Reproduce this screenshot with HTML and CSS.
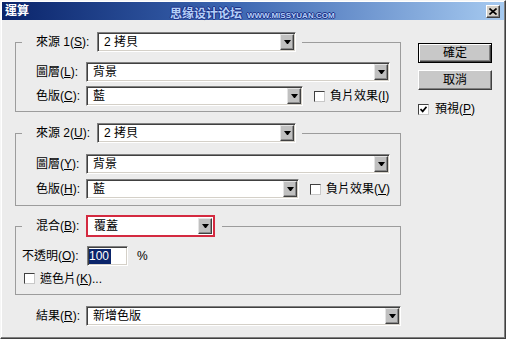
FILE: index.html
```html
<!DOCTYPE html>
<html lang="zh-Hant">
<head>
    <meta charset="UTF-8">
    <meta name="viewport" content="width=device-width, initial-scale=1.0">
    <title>運算</title>
    <link rel="stylesheet" href="styles.css">
</head>
<body>
<div class="window">
    <div class="titlebar">
        <span class="title">運算</span>
        <span class="watermark">思缘设计论坛<small>WWW.MISSYUAN.COM</small></span>
        <span class="close">
            <svg width="8" height="7" viewBox="0 0 8 7"><path d="M0.5 0.5 L7.5 6.5 M7.5 0.5 L0.5 6.5" stroke="#000" stroke-width="1.6"/></svg>
        </span>
    </div>

    <div class="content">
        <div class="main">
            <!-- 來源 1 -->
            <fieldset class="group group-a">
                <legend class="legend">
                    <span class="lbl lbl-src">來源 1(<u>S</u>):</span>
                    <span class="select w-src"><span class="value">2 拷貝</span><span class="arrow"></span></span>
                </legend>
                <div class="rows">
                    <div class="row">
                        <span class="lbl">圖層(<u>L</u>):</span>
                        <span class="select w-full"><span class="value">背景</span><span class="arrow"></span></span>
                    </div>
                    <div class="row">
                        <span class="lbl">色版(<u>C</u>):</span>
                        <span class="select w-ch1"><span class="value">藍</span><span class="arrow"></span></span>
                        <span class="check"></span>
                        <span class="check-lbl">負片效果(<u>I</u>)</span>
                    </div>
                </div>
            </fieldset>

            <!-- 來源 2 -->
            <fieldset class="group group-b">
                <legend class="legend">
                    <span class="lbl lbl-src">來源 2(<u>U</u>):</span>
                    <span class="select w-src"><span class="value">2 拷貝</span><span class="arrow"></span></span>
                </legend>
                <div class="rows">
                    <div class="row">
                        <span class="lbl">圖層(<u>Y</u>):</span>
                        <span class="select w-full"><span class="value">背景</span><span class="arrow"></span></span>
                    </div>
                    <div class="row">
                        <span class="lbl">色版(<u>H</u>):</span>
                        <span class="select w-ch2"><span class="value">藍</span><span class="arrow"></span></span>
                        <span class="check"></span>
                        <span class="check-lbl">負片效果(<u>V</u>)</span>
                    </div>
                </div>
            </fieldset>

            <!-- 混合 -->
            <fieldset class="group group-c">
                <legend class="legend legend-mode">
                    <span class="lbl">混合(<u>B</u>):</span>
                    <span class="select marked w-mode"><span class="value">覆蓋</span><span class="arrow"></span></span>
                </legend>
                <div class="rows">
                    <div class="row row-opacity">
                        <span class="lbl lbl-opacity">不透明(<u>O</u>):</span>
                        <span class="field"><span class="sel">100</span></span>
                        <span class="unit">%</span>
                    </div>
                    <div class="row row-mask">
                        <span class="check"></span>
                        <span class="check-lbl">遮色片(<u>K</u>)...</span>
                    </div>
                </div>
            </fieldset>

            <div class="row row-result">
                <span class="lbl">結果(<u>R</u>):</span>
                <span class="select w-result"><span class="value">新增色版</span><span class="arrow"></span></span>
            </div>
        </div>

        <div class="side">
            <button class="btn btn-default">確定</button>
            <button class="btn">取消</button>
            <div class="preview">
                <span class="check">
                    <svg width="7" height="7" viewBox="0 0 7 7"><path d="M0.5 3 L2.7 5.4 L6.5 0.8" fill="none" stroke="#000" stroke-width="1.7"/></svg>
                </span>
                <span class="check-lbl">預視(<u>P</u>)</span>
            </div>
        </div>
    </div>
</div>
</body>
</html>
```

FILE: styles.css
```css
body {
    margin: 0;
    background: #ececec;
    font: 12px/14px "Liberation Sans", "Noto Sans CJK TC", sans-serif;
    color: #000;
}

u {
    text-decoration: underline;
    text-underline-offset: 1px;
}

/* Ventana del diálogo */
.window {
    width: 506px;
    height: 339px;
    box-sizing: border-box;
    padding: 1px;
    border: 1px solid;
    border-color: #f6f6f6 #404040 #404040 #f6f6f6;
    box-shadow: inset -1px -1px #808080, inset 1px 1px #fff;
    background: #ececec;
}

.titlebar {
    position: relative;
    height: 18px;
    display: flex;
    align-items: center;
    padding-left: 3px;
    background: linear-gradient(to right, #0a246a, #3a64b0 45%, #a6caf0);
    color: #fff;
}

.title {
    font-weight: bold;
    line-height: 18px;
}

.watermark {
    position: absolute;
    left: 168px;
    top: 4px;
    font: bold 12px/14px "Noto Sans CJK SC", sans-serif;
    color: #b4cff8;
    text-shadow: 1px 0 #1c2f86, -1px 0 #1c2f86, 0 1px #1c2f86, 0 -1px #1c2f86;
}

.watermark small {
    margin-left: 5px;
    font: bold 8px/14px "Liberation Sans", sans-serif;
}

.close {
    margin-left: auto;
    margin-right: 4px;
    width: 14px;
    height: 13px;
    box-sizing: border-box;
    display: flex;
    align-items: center;
    justify-content: center;
    background: #d4d0c8;
    border: 1px solid;
    border-color: #fff #404040 #404040 #fff;
    box-shadow: inset -1px -1px #808080;
}

.content {
    display: flex;
}

.main {
    width: 386px;
    padding: 12px 0 0 13px;
}

/* Grupos */
.group {
    box-sizing: border-box;
    width: 386px;
    min-width: 0;
    margin: 0;
    padding: 0 10px 5px 0;
    border: 1px solid #9c9c9c;
}

.group-b {
    margin-top: 11px;
    padding-bottom: 6px;
}

.group-c {
    margin-top: 9px;
    padding-bottom: 8px;
}

.legend {
    display: flex;
    align-items: center;
    margin-left: 6px;
    padding: 0 6px 0 14px;
}

.legend-mode {
    padding-right: 7px;
}

.rows {
    display: flex;
    flex-direction: column;
    gap: 4px;
    padding-top: 10px;
}

.group-b .rows {
    gap: 5px;
    padding-top: 11px;
}

.group-c .rows {
    gap: 5px;
    padding-top: 9px;
}

.row {
    display: flex;
    align-items: center;
    padding-left: 20px;
}

.lbl {
    flex: none;
    width: 50px;
    white-space: nowrap;
}

.lbl-src {
    width: 61px;
}

.lbl-opacity {
    width: 65px;
}

/* Listas desplegables */
.select {
    flex: none;
    height: 20px;
    box-sizing: border-box;
    display: flex;
    align-items: center;
    background: #fff;
    border: 1px solid;
    border-color: #808080 #fff #fff #808080;
    box-shadow: inset 1px 1px #404040, inset -1px -1px #d4d0c8;
}

.select .value {
    flex: 1;
    padding-left: 6px;
    white-space: nowrap;
}

.select .arrow {
    width: 14px;
    height: 16px;
    box-sizing: border-box;
    margin-right: 1px;
    display: flex;
    align-items: center;
    justify-content: center;
    background: #c0c0c0;
    border: 1px solid;
    border-color: #e4e4e4 #404040 #404040 #e4e4e4;
    box-shadow: inset -1px -1px #8a8a8a;
}

.select .arrow::before {
    content: "";
    width: 1px;
    border-top: 4px solid #000;
    border-left: 3px solid transparent;
    border-right: 3px solid transparent;
}

.select.marked {
    height: 22px;
    border: 2px solid #d42a40;
    box-shadow: none;
}

.w-src { width: 199px; }
.w-full { width: 304px; }
.w-ch1 { width: 217px; }
.w-ch2 { width: 213px; }
.w-mode { width: 129px; }
.w-result { width: 315px; }

/* Casillas */
.check {
    flex: none;
    width: 11px;
    height: 11px;
    box-sizing: border-box;
    display: flex;
    align-items: center;
    justify-content: center;
    margin-left: 11px;
    background: #fff;
    border: 1px solid;
    border-color: #404040 #c8c8c8 #c8c8c8 #404040;
}

.check-lbl {
    margin-left: 5px;
    white-space: nowrap;
}

.row-opacity {
    padding-left: 6px;
}

.field {
    width: 41px;
    height: 20px;
    box-sizing: border-box;
    display: flex;
    align-items: center;
    padding-left: 1px;
    background: #fff;
    border: 1px solid;
    border-color: #808080 #fff #fff #808080;
    box-shadow: inset 1px 1px #404040, inset -1px -1px #d4d0c8;
}

.field .sel {
    padding-right: 2px;
    line-height: 15px;
    background: #0a246a;
    color: #fff;
}

.unit {
    margin-left: 9px;
}

.row-mask {
    height: 15px;
    padding-left: 8px;
}

.row-mask .check {
    margin-left: 0;
}

.row-result {
    margin-top: 11px;
    padding-left: 21px;
}

/* Botones */
.side {
    display: flex;
    flex-direction: column;
    margin-left: 17px;
    padding-top: 23px;
}

.btn {
    width: 74px;
    height: 20px;
    padding: 0;
    font: 12px/14px "Liberation Sans", "Noto Sans CJK TC", sans-serif;
    color: #000;
    background: #c8c8c8;
    border: 1px solid;
    border-color: #fff #404040 #404040 #fff;
    box-shadow: inset -1px -1px #808080;
    margin-bottom: 7px;
}

.btn-default {
    border-color: #000;
    box-shadow: inset 1px 1px #fff, inset -1px -1px #404040, inset -2px -2px #808080;
}

.preview {
    display: flex;
    align-items: center;
    margin-top: 5px;
}

.preview .check {
    margin-left: 0;
}

.preview .check-lbl {
    margin-left: 6px;
}
```
